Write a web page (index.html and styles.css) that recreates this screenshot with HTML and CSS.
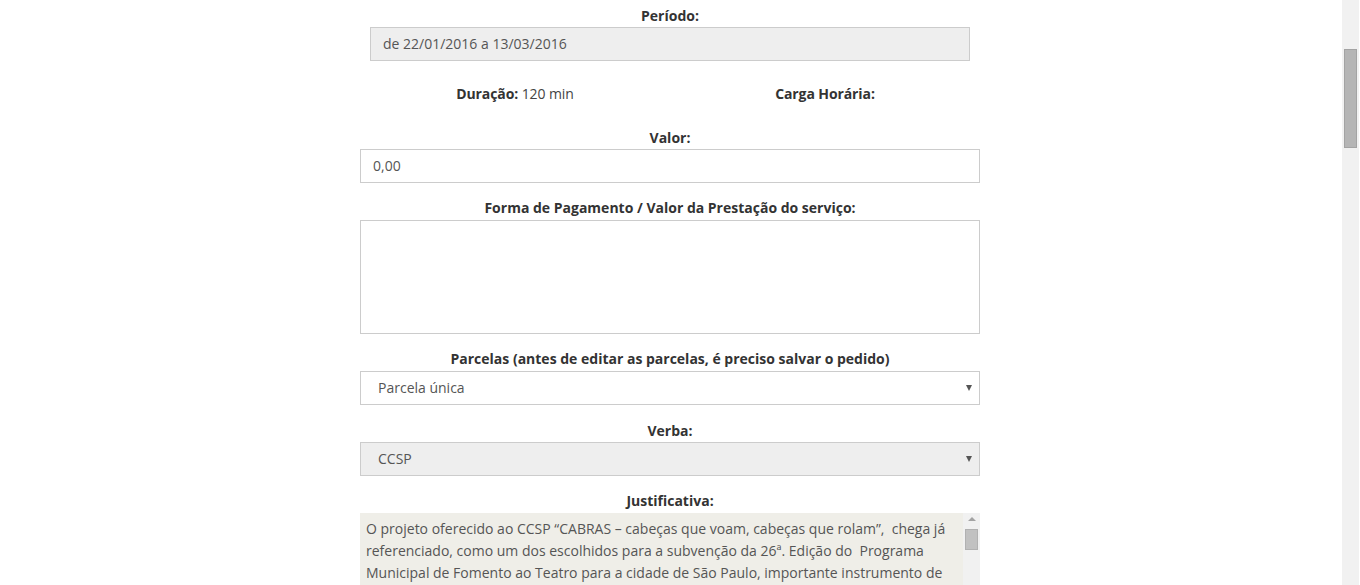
FILE: index.html
```html
<!DOCTYPE html>
<html lang="pt">
<head>
<meta charset="utf-8">
<title>Pedido</title>
<link rel="stylesheet" href="styles.css">
</head>
<body>
<div class="page">
  <main class="main">
    <form class="form">
      <div class="group">
        <label class="label">Período:</label>
        <div class="field field-ro field-narrow">de 22/01/2016 a 13/03/2016</div>
      </div>

      <div class="row">
        <div class="col"><b>Duração:</b> <span class="val">120 min</span></div>
        <div class="col"><b>Carga Horária:</b></div>
      </div>

      <div class="group">
        <label class="label">Valor:</label>
        <div class="field">0,00</div>
      </div>

      <div class="group">
        <label class="label label-ta">Forma de Pagamento / Valor da Prestação do serviço:</label>
        <div class="textarea"></div>
      </div>

      <div class="group group-parcelas">
        <label class="label label-ta">Parcelas (antes de editar as parcelas, é preciso salvar o pedido)</label>
        <div class="field select">
          <span>Parcela única</span>
          <span class="caret"></span>
        </div>
      </div>

      <div class="group">
        <label class="label">Verba:</label>
        <div class="field select field-ro">
          <span>CCSP</span>
          <span class="caret"></span>
        </div>
      </div>

      <div class="group">
        <label class="label label-ta">Justificativa:</label>
        <div class="just">
          <div class="just-text">O projeto oferecido ao CCSP “CABRAS – cabeças que voam, cabeças que rolam”,  chega já referenciado, como um dos escolhidos para a subvenção da 26ª. Edição do  Programa Municipal de Fomento ao Teatro para a cidade de São Paulo, importante instrumento de política pública de fomento às artes.</div>
          <div class="mini-sb">
            <span class="mini-up"></span>
            <span class="mini-thumb"></span>
          </div>
        </div>
      </div>
    </form>
  </main>
  <div class="page-sb"><span class="page-thumb"></span></div>
</div>
</body>
</html>
```

FILE: styles.css
```css
* { box-sizing: border-box; }

html, body {
  margin: 0;
  height: 100%;
  overflow: hidden;
  background: #fff;
}

body {
  font-family: "Open Sans", "Liberation Sans", sans-serif;
  font-size: 14px;
  color: #333;
}

.page {
  display: flex;
  height: 585px;
}

.main {
  flex: 1;
  overflow: hidden;
}

.form {
  width: 620px;
  margin-left: 360px;
  padding-top: 6px;
}

.group {
  display: flex;
  flex-direction: column;
  align-items: center;
  margin-bottom: 15px;
}

.group-parcelas { margin-bottom: 16px; }

.label {
  display: block;
  font-weight: 700;
  line-height: 20px;
  margin-bottom: 1px;
  color: #333;
  text-align: center;
}

.label-ta { margin-bottom: 2px; }

.field {
  width: 620px;
  height: 34px;
  border: 1px solid #ccc;
  background: #fff;
  color: #555;
  padding: 0 12px;
  display: flex;
  align-items: center;
  line-height: 20px;
}

.field-narrow {
  width: 600px;
}

.field-ro {
  background: #eee;
}

.select {
  padding: 0 7px 0 17px;
  justify-content: space-between;
}

.caret {
  width: 0;
  height: 0;
  border-left: 3.5px solid transparent;
  border-right: 3.5px solid transparent;
  border-top: 6px solid #555;
}

.textarea {
  width: 620px;
  height: 114px;
  border: 1px solid #ccc;
  background: #fff;
}

.row {
  display: flex;
  margin-top: 23px;
  margin-bottom: 24px;
  line-height: 20px;
}

.col {
  flex: 1;
  text-align: center;
  letter-spacing: -0.1px;
}

.col b { color: #333; }
.val { color: #444; }

.just {
  width: 620px;
  height: 120px;
  background: #efeee8;
  display: flex;
}

.just-text {
  flex: 1;
  padding: 5px 6px;
  line-height: 22px;
  color: #555;
  white-space: pre-wrap;
  overflow: hidden;
}

.mini-sb {
  width: 17px;
  background: #f1f1f1;
  display: flex;
  flex-direction: column;
  align-items: center;
  padding-top: 4px;
}

.mini-up {
  width: 0;
  height: 0;
  border-left: 4px solid transparent;
  border-right: 4px solid transparent;
  border-bottom: 4px solid #a3a3a3;
  margin-bottom: 8px;
}

.mini-thumb {
  width: 13px;
  height: 21px;
  background: #c1c1c1;
  border: 1px solid #b1b1b1;
}

.page-sb {
  width: 18px;
  background: #f1f1f1;
  border-right: 1px solid #fff;
  padding-top: 49px;
  display: flex;
  justify-content: center;
}

.page-thumb {
  width: 13px;
  height: 99px;
  background: #b5b5b5;
  border: 1px solid #a3a3a3;
}
```
